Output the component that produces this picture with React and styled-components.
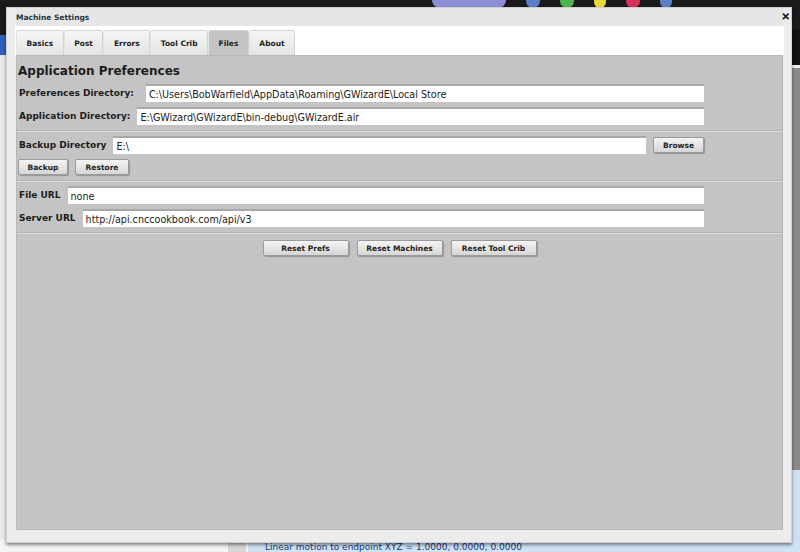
import React from "react";
import styled, { createGlobalStyle } from "styled-components";

const GlobalStyle = createGlobalStyle`
  html, body {
    margin: 0;
    padding: 0;
    background: #1b1b1b;
  }
  * {
    box-sizing: border-box;
  }
`;

const tabs = ["Basics", "Post", "Errors", "Tool Crib", "Files", "About"];
const tray = [
  { w: 74, c: "#8d8fd6" },
  { w: 14, c: "#5a7fc4" },
  { w: 14, c: "#4db24a" },
  { w: 12, c: "#e6d83a" },
  { w: 14, c: "#d8325a" },
  { w: 12, c: "#5a7fc4" },
];

const App = () => {
  return (
    <Desktop>
      <GlobalStyle />
      <TopBar>
        {tray.map((t, i) => (
          <TrayIcon key={i} $w={t.w} $c={t.c} />
        ))}
      </TopBar>
      <Middle>
        <LeftStrip />
        <Filler />
        <RightStrip />
      </Middle>
      <LogStrip>
        <LogGutter />
        <LogLine>Linear motion to endpoint XYZ = 1.0000, 0.0000, 0.0000</LogLine>
      </LogStrip>

      <Dialog>
        <TitleBar>
          <Title>Machine Settings</Title>
          <Close>✕</Close>
        </TitleBar>
        <TabStrip>
          {tabs.map((t) => (
            <Tab key={t} $active={t === "Files"}>
              {t}
            </Tab>
          ))}
        </TabStrip>
        <Panel>
          <Section $first>
            <Heading>Application Preferences</Heading>
            <Row>
              <Label $gap={12}>Preferences Directory:</Label>
              <Field>C:\Users\BobWarfield\AppData\Roaming\GWizardE\Local Store</Field>
            </Row>
            <Row>
              <Label>Application Directory:</Label>
              <Field>E:\GWizard\GWizardE\bin-debug\GWizardE.air</Field>
            </Row>
          </Section>
          <Divider />
          <Section>
            <Row>
              <Label>Backup Directory</Label>
              <Field>E:\</Field>
              <Button $w={51}>Browse</Button>
            </Row>
            <Buttons>
              <Button $w={50}>Backup</Button>
              <Button $w={54}>Restore</Button>
            </Buttons>
          </Section>
          <Divider />
          <Section>
            <Row>
              <Label>File URL</Label>
              <Field>none</Field>
            </Row>
            <Row>
              <Label>Server URL</Label>
              <Field>http://api.cnccookbook.com/api/v3</Field>
            </Row>
          </Section>
          <Divider />
          <CenterButtons>
            <Button $w={86}>Reset Prefs</Button>
            <Button $w={86}>Reset Machines</Button>
            <Button $w={86}>Reset Tool Crib</Button>
          </CenterButtons>
        </Panel>
      </Dialog>
    </Desktop>
  );
};

const Desktop = styled.div`
  position: relative;
  width: 800px;
  height: 552px;
  overflow: hidden;
  display: flex;
  flex-direction: column;
  background: #1b1b1b;
`;

const TopBar = styled.div`
  height: 30px;
  display: flex;
  align-items: flex-start;
  gap: 20px;
  padding-left: 432px;
  background: #1a1a1a;
`;

const TrayIcon = styled.span`
  width: ${(p) => p.$w}px;
  height: 16px;
  margin-top: -8px;
  border-radius: 8px;
  background: ${(p) => p.$c};
`;

const Middle = styled.div`
  flex: 1;
  display: flex;
`;

const LeftStrip = styled.div`
  width: 8px;
  background: linear-gradient(#1a1a1a 0, #1a1a1a 5px, #2f5fb8 5px, #2f5fb8 25px, #e8e8e8 25px, #e8e8e8 100%);
`;

const Filler = styled.div`
  flex: 1;
  background: #d8d8d8;
`;

const RightStrip = styled.div`
  width: 10px;
  background: linear-gradient(#111 0, #111 35px, #eee 35px, #eee 38px, #8a8a8a 38px, #8a8a8a 440px, #cfe0f0 440px);
`;

const LogStrip = styled.div`
  height: 12px;
  display: flex;
  background: #f4f4f4;
`;

const LogGutter = styled.div`
  width: 20px;
  margin-left: 228px;
  background: #d6d6d6;
  border-right: 2px solid #f4f4f4;
`;

const LogLine = styled.div`
  flex: 1;
  padding: 2px 0 0 17px;
  background: #cfe3f5;
  color: #1c3a78;
  font-family: "DejaVu Sans", Verdana, sans-serif;
  font-size: 9px;
  line-height: 10px;
  white-space: nowrap;
`;

const Dialog = styled.div`
  position: absolute;
  left: 6px;
  top: 7px;
  width: 786px;
  height: 536px;
  display: flex;
  flex-direction: column;
  background: #ececec;
  border: 1px solid #d0d0d0;
  box-shadow: 0 2px 3px rgba(0, 0, 0, 0.45);
  padding: 0 8px 12px 9px;
  font-family: "DejaVu Sans", Verdana, sans-serif;
`;

const TitleBar = styled.div`
  height: 18px;
  display: flex;
  align-items: center;
  justify-content: space-between;
  background: #e6e6e6;
`;

const Title = styled.div`
  font-size: 7.5px;
  font-weight: bold;
  color: #24343c;
`;

const Close = styled.div`
  font-size: 10px;
  font-weight: 900;
  color: #111;
  margin: -2px -7px 0 0;
  -webkit-text-stroke: 0.6px #111;
`;

const TabStrip = styled.div`
  height: 29px;
  display: flex;
  align-items: flex-end;
  padding: 0 0 0 1px;
  margin: 0 -1px 0 -1px;
  background: #ffffff;
`;

const Tab = styled.div`
  height: 25px;
  padding: 0 9.5px;
  display: flex;
  align-items: center;
  font-size: 7.5px;
  font-weight: bold;
  color: #222;
  border: 1px solid #d4d4d4;
  border-left-color: #e4e4e4;
  border-bottom: none;
  border-radius: 3px 3px 0 0;
  background: ${(p) =>
    p.$active ? "#c4c4c4" : "linear-gradient(#f6f6f6, #e4e4e4)"};
`;

const Panel = styled.div`
  flex: 1;
  display: flex;
  flex-direction: column;
  background: #c4c4c4;
  border: 1px solid #b8b8b8;
  padding: 2px 0 0 0;
`;

const Section = styled.div`
  display: flex;
  flex-direction: column;
  gap: 5px;
  padding: ${(p) => (p.$first ? "0" : "4px")} 78px 5px 1px;
`;

const Heading = styled.div`
  font-size: 12px;
  font-weight: bold;
  color: #1c1c1c;
  margin: 5px 0 0 0;
  line-height: 16px;
`;

const Row = styled.div`
  display: flex;
  align-items: center;
`;

const Label = styled.div`
  font-size: 9px;
  font-weight: bold;
  color: #1c1c1c;
  white-space: nowrap;
  padding-left: 1px;
  margin-right: ${(p) => p.$gap || 7}px;
`;

const Field = styled.div`
  flex: 1;
  height: 18px;
  display: flex;
  align-items: center;
  padding-left: 3px;
  background: #fff;
  border-top: 2px solid #a8a8a8;
  font-size: 9.6px;
  color: #222;
  white-space: nowrap;
  & + div {
    margin-left: 7px;
  }
`;

const Button = styled.div`
  width: ${(p) => p.$w}px;
  height: 16px;
  display: flex;
  align-items: center;
  justify-content: center;
  font-size: 7.5px;
  font-weight: bold;
  color: #222;
  background: linear-gradient(#f4f4f4, #d6d6d6);
  border: 1px solid #9a9a9a;
  border-radius: 2px;
  box-shadow: 1px 1px 1px rgba(0, 0, 0, 0.25);
  white-space: nowrap;
`;

const Buttons = styled.div`
  display: flex;
  gap: 7px;
`;

const CenterButtons = styled.div`
  display: flex;
  justify-content: center;
  gap: 8px;
  padding: 6px 0 0 0;
`;

const Divider = styled.div`
  height: 2px;
  border-top: 1px solid #b4b4b4;
  border-bottom: 1px solid #dcdcdc;
`;

export default App;
